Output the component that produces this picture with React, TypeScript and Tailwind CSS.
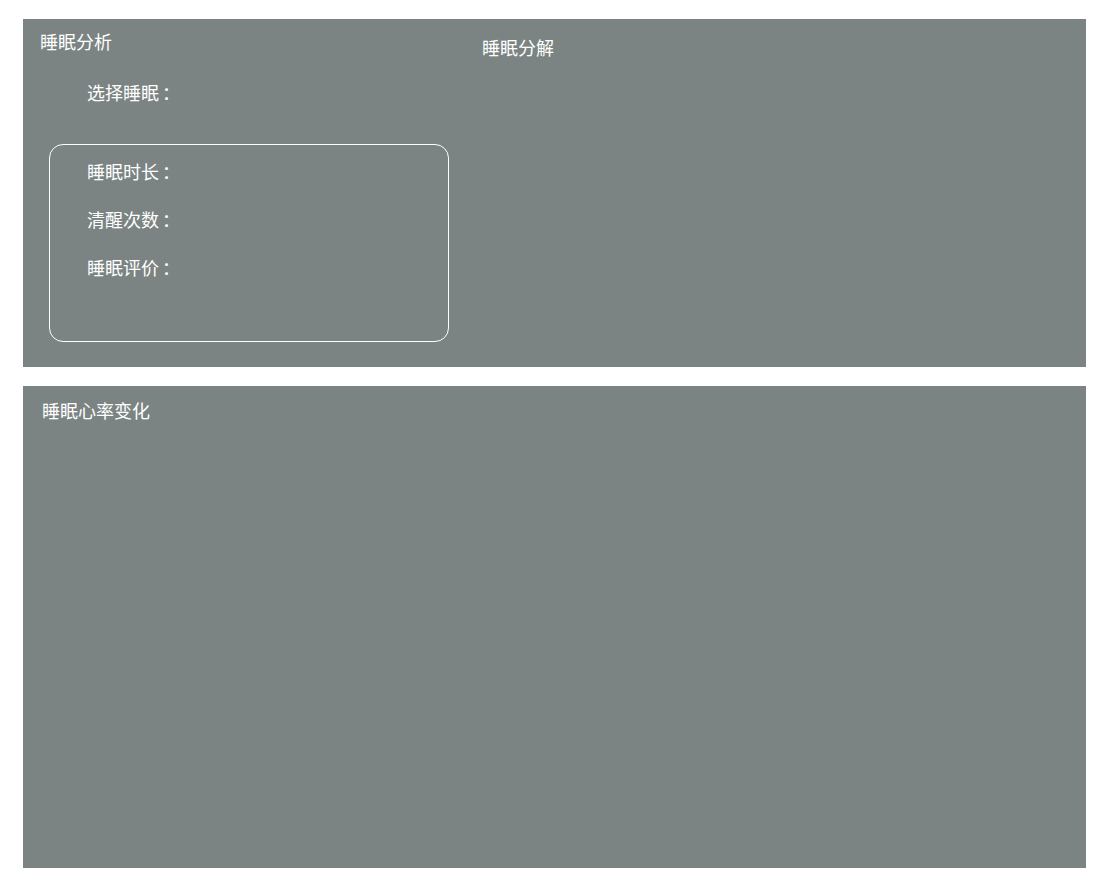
import React from 'react';

const font = { fontFamily: '"Noto Sans CJK SC", "Noto Sans", sans-serif' };

const Label = ({ text }: { text: string }) => (
  <span>
    {text}
    <span className="ml-[3px]">：</span>
  </span>
);

const SummaryBox = () => {
  const rows = ['睡眠时长', '清醒次数', '睡眠评价'];
  return (
    <div className="ml-[9px] mt-[39px] h-[198px] w-[400px] rounded-[14px] border border-white pl-[37px] pt-[13px]">
      <ul className="flex flex-col gap-y-[22px]">
        {rows.map((r) => (
          <li key={r} className="text-[18px] leading-[26px] text-white">
            <Label text={r} />
          </li>
        ))}
      </ul>
    </div>
  );
};

export default function App() {
  return (
    <div className="min-h-screen bg-white pt-[19px]" style={font}>
      <div className="ml-[23px] flex w-[1063px] flex-col gap-y-[19px]">
        <section className="flex h-[348px] bg-[#7b8482]">
          <div className="flex w-[442px] flex-col pl-[17px] pt-[9px]">
            <h2 className="text-[18px] leading-[26px] text-white">睡眠分析</h2>
            <div className="ml-[47px] mt-[25px] text-[18px] leading-[26px] text-white">
              <Label text="选择睡眠" />
            </div>
            <SummaryBox />
          </div>
          <div className="flex-1 pl-[17px] pt-[15px]">
            <h2 className="text-[18px] leading-[26px] text-white">睡眠分解</h2>
          </div>
        </section>
        <section className="h-[482px] bg-[#7b8482] pl-[19px] pt-[11px]">
          <h2 className="text-[18px] leading-[26px] text-white">睡眠心率变化</h2>
        </section>
      </div>
    </div>
  );
}
